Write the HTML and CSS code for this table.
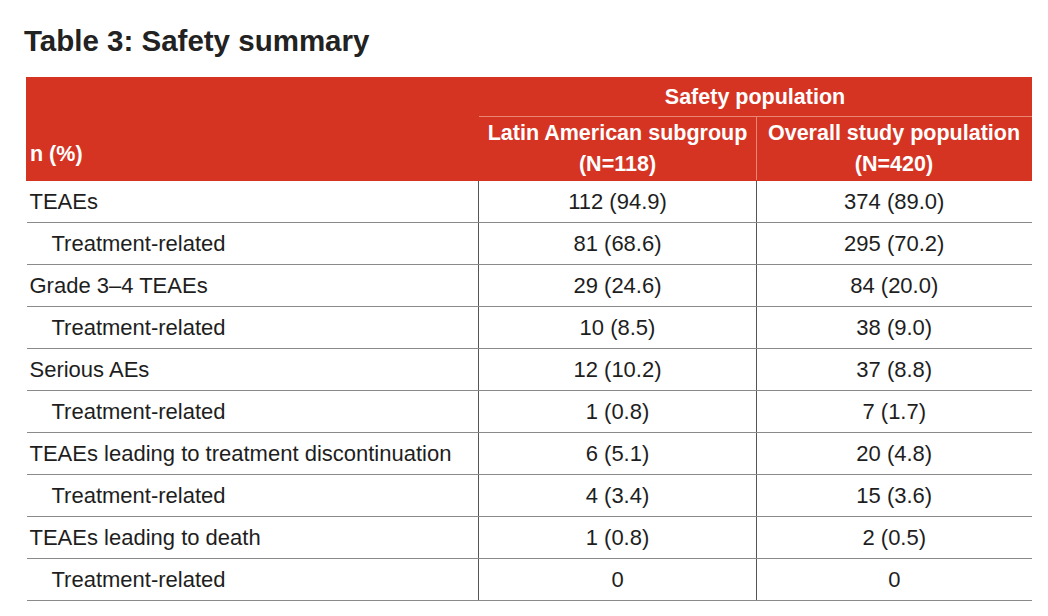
FILE: index.html
```html
<!DOCTYPE html>
<html lang="en">
<head>
    <meta charset="UTF-8">
    <title>Table 3: Safety summary</title>
    <link rel="stylesheet" href="styles.css">
</head>
<body>
    <div class="page">
        <h1 class="title">Table 3: Safety summary</h1>

        <table class="summary">
            <colgroup>
                <col class="colLabel">
                <col class="colLatin">
                <col class="colOverall">
            </colgroup>
            <thead>
                <tr class="headTop">
                    <th class="label" rowspan="2">n (%)</th>
                    <th colspan="2">Safety population</th>
                </tr>
                <tr class="headSub">
                    <th>Latin American subgroup<br>(N=118)</th>
                    <th>Overall study population<br>(N=420)</th>
                </tr>
            </thead>
            <tbody>
                <tr><td>TEAEs</td><td>112 (94.9)</td><td>374 (89.0)</td></tr>
                <tr class="sub"><td>Treatment-related</td><td>81 (68.6)</td><td>295 (70.2)</td></tr>
                <tr><td>Grade 3–4 TEAEs</td><td>29 (24.6)</td><td>84 (20.0)</td></tr>
                <tr class="sub"><td>Treatment-related</td><td>10 (8.5)</td><td>38 (9.0)</td></tr>
                <tr><td>Serious AEs</td><td>12 (10.2)</td><td>37 (8.8)</td></tr>
                <tr class="sub"><td>Treatment-related</td><td>1 (0.8)</td><td>7 (1.7)</td></tr>
                <tr><td>TEAEs leading to treatment discontinuation</td><td>6 (5.1)</td><td>20 (4.8)</td></tr>
                <tr class="sub"><td>Treatment-related</td><td>4 (3.4)</td><td>15 (3.6)</td></tr>
                <tr><td>TEAEs leading to death</td><td>1 (0.8)</td><td>2 (0.5)</td></tr>
                <tr class="sub"><td>Treatment-related</td><td>0</td><td>0</td></tr>
            </tbody>
        </table>
    </div>
</body>
</html>
```

FILE: styles.css
```css
body {
    margin: 0;
    background-color: #fff;
    font-family: "Liberation Sans", Arial, sans-serif;
    color: #1e1e1e;
}

.page {
    padding: 23px 17px 0 26px;
}

.title {
    margin: 0 0 19px -2px;
    font-size: 29.5px;
    line-height: 35px;
    font-weight: bold;
    color: #222;
}

/* 表格 */
.summary {
    width: 1005px;
    border-collapse: collapse;
    table-layout: fixed;
    font-size: 22px;
}

.colLabel {
    width: 452px;
}

.colLatin {
    width: 278px;
}

.colOverall {
    width: 275px;
}

.summary th {
    background-color: #d63423;
    color: #fff;
    font-weight: bold;
    font-size: 21.5px;
    text-align: center;
    border: 1px solid #e98674;
    padding: 0 2px;
    white-space: nowrap;
}

.summary th.label {
    text-align: left;
    vertical-align: bottom;
    padding: 0 0 13px 3px;
    border-left-color: #d63423;
    border-top-color: #d63423;
    border-bottom-color: #d63423;
}

.headTop th {
    height: 38px;
    border-top-color: #d63423;
    border-right-color: #d63423;
}

.headSub th {
    height: 63px;
    line-height: 31px;
    border-bottom-color: #d63423;
}

.headSub th:last-child {
    border-right-color: #d63423;
}

.summary td {
    height: 41px;
    padding: 0 2px;
    border-bottom: 1px solid #8a8a8a;
    text-align: center;
    white-space: nowrap;
}

.summary td:first-child {
    text-align: left;
    padding-left: 3px;
    border-right: 1px solid #555;
}

.summary td:nth-child(2) {
    border-right: 1px solid #555;
}

.summary tr.sub td:first-child {
    padding-left: 25px;
}
```
